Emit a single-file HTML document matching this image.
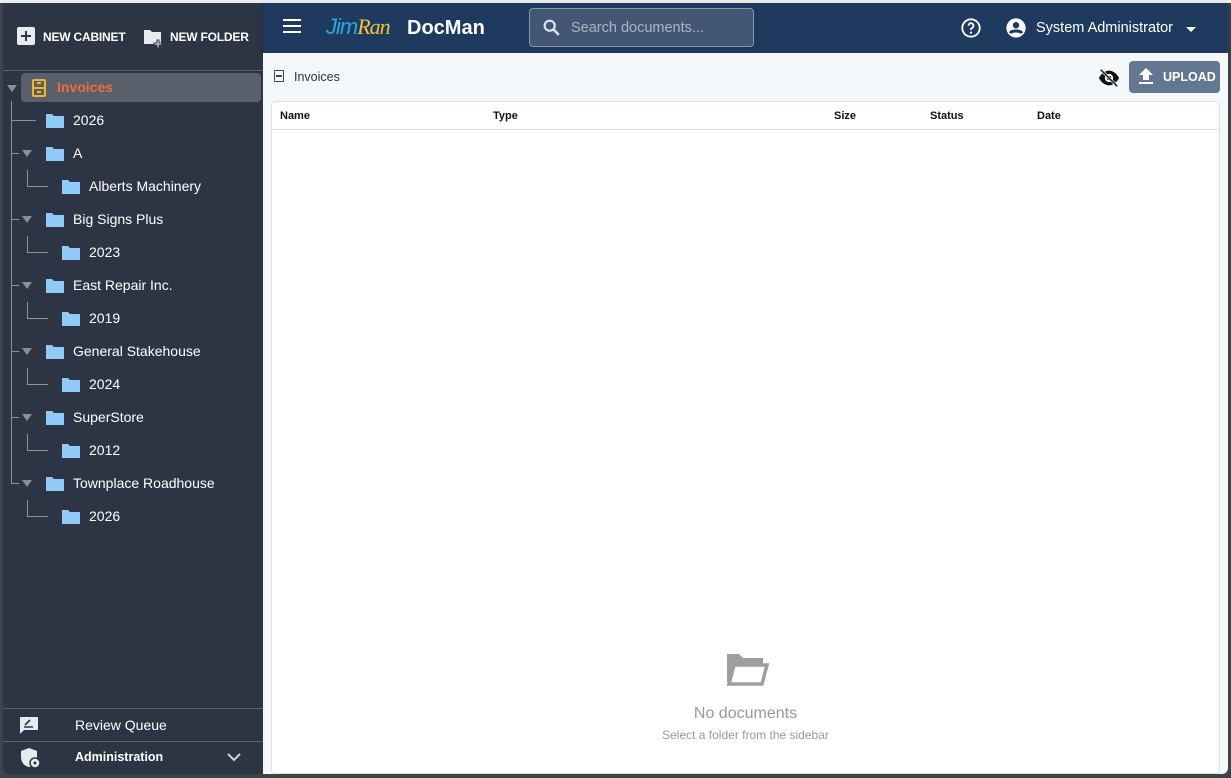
<!DOCTYPE html>
<html><head><meta charset="utf-8"><style>
*{box-sizing:border-box;margin:0;padding:0}
body{width:1231px;height:778px;background:#3d4347;font-family:"Liberation Sans",Roboto,sans-serif;position:relative;overflow:hidden}
.top{position:absolute;left:0;top:0;width:1231px;height:3px;background:#ececec}
.side{position:absolute;left:3px;top:3px;width:260px;height:771px;background:#2d3444;border-bottom-left-radius:6px}
.hdr{position:absolute;left:263px;top:3px;width:965px;height:50px;background:#1f3a5f;box-shadow:0 2px 4px rgba(0,0,0,.25)}
.main{position:absolute;left:263px;top:53px;width:965px;height:721px;background:#f5f8fb;border-bottom-right-radius:6px}
.card{position:absolute;left:271px;top:101px;width:949px;height:673px;background:#fff;border:1px solid #e0e0e0;border-radius:4px}
.a{position:absolute;white-space:nowrap}
.w{color:#fff}
.tl{position:absolute;background:#8e949c}
.row{position:absolute;color:#fff;font-size:14px;height:20px;line-height:20px}
.tri{position:absolute;width:0;height:0;border-left:5px solid transparent;border-right:5px solid transparent;border-top:7px solid #8b8f96}
</style></head><body>
<div class="top"></div>
<div class="side">
 <div class="a" style="left:14px;top:24px;width:18px;height:18px;background:#e6ebf0;border-radius:2px"></div>
 <div class="a" style="left:18px;top:32px;width:10px;height:2px;background:#2d3444"></div>
 <div class="a" style="left:22px;top:28px;width:2px;height:10px;background:#2d3444"></div>
 <div class="a w" style="left:40px;top:27px;font-size:12px;font-weight:bold;letter-spacing:-0.2px">NEW CABINET</div>
 <svg class="a" style="left:140px;top:24px" width="22" height="22" viewBox="0 0 22 22"><path d="M1 3h6l2 2h9v12H1z" fill="#e6ebf0"/><path d="M14 13h2v3h3v2h-3v3h-2v-3h-3v-2h3z" fill="#e6ebf0" stroke="#2d3444" stroke-width="1"/></svg>
 <div class="a w" style="left:167px;top:27px;font-size:12px;font-weight:bold;letter-spacing:-0.2px">NEW FOLDER</div>
 <div class="a" style="left:0;top:67px;width:260px;height:1px;background:#5a606b"></div>
 <div class="a" style="left:18px;top:70px;width:240px;height:29px;background:#5a606b;border-radius:4px"></div>
 <div class="tri" style="left:4px;top:82px"></div>
 <div class="a" style="left:29px;top:76px;width:14px;height:18px;border:2px solid #f0b429;border-radius:2px"></div>
 <div class="a" style="left:31px;top:84px;width:10px;height:2px;background:#f0b429"></div>
 <div class="a" style="left:34px;top:79px;width:4px;height:2px;background:#f0b429"></div>
 <div class="a" style="left:34px;top:88px;width:4px;height:2px;background:#f0b429"></div>
 <div class="a" style="left:54px;top:76px;font-size:14px;font-weight:bold;color:#f26a3d">Invoices</div>
</div>
<div class="hdr">
 <div class="a" style="left:20px;top:16px;width:18px;height:2px;background:#fff;box-shadow:0 6px 0 #fff,0 12px 0 #fff"></div>
 <div class="a" style="left:63px;top:11px;font-size:22px;font-style:italic;letter-spacing:-1px"><span style="color:#29a8e0">Jim</span><span style="color:#f3c13a;font-family:'Liberation Serif',serif">Ran</span></div>
 <div class="a w" style="left:144px;top:14px;font-size:20px;font-weight:bold">DocMan</div>
 <div class="a" style="left:266px;top:5px;width:225px;height:39px;background:#435775;border:1px solid #8596ad;border-radius:4px"></div>
 <svg class="a" style="left:278px;top:14px" width="22" height="22" viewBox="0 0 24 24"><circle cx="9.5" cy="9.5" r="5.5" fill="none" stroke="#dfe5ee" stroke-width="2.4"/><path d="M13.5 13.5l6 6" stroke="#dfe5ee" stroke-width="2.6"/></svg>
 <div class="a" style="left:308px;top:17px;font-size:14.5px;color:#a9b5c6">Search documents...</div>
 <svg class="a" style="left:697px;top:14px" width="22" height="22" viewBox="0 0 24 24"><circle cx="12" cy="12" r="9.5" fill="none" stroke="#fff" stroke-width="2"/><path d="M9.3 9.5a2.7 2.7 0 1 1 3.8 2.4c-.8.4-1.1.9-1.1 1.8v.5" fill="none" stroke="#fff" stroke-width="2"/><circle cx="12" cy="17" r="1.2" fill="#fff"/></svg>
 <svg class="a" style="left:742px;top:14px" width="22" height="22" viewBox="0 0 24 24"><circle cx="12" cy="12" r="10.5" fill="#fff"/><circle cx="12" cy="9" r="3.5" fill="#1f3a5f"/><path d="M5.5 17.5c2-3 11-3 13 0" stroke="#1f3a5f" stroke-width="3.2" fill="none"/></svg>
 <div class="a w" style="left:773px;top:17px;font-size:14.5px">System Administrator</div>
 <div class="a" style="left:923px;top:24px;border-left:5px solid transparent;border-right:5px solid transparent;border-top:5px solid #fff"></div>
</div>
<div class="main">
 <div class="a" style="left:11px;top:17px;width:10px;height:12px;border:1.5px solid #444;border-radius:1px"></div>
 <div class="a" style="left:13px;top:22px;width:6px;height:1.5px;background:#444"></div>
 <div class="a" style="left:31px;top:17px;font-size:12.5px;color:#333">Invoices</div>
 <svg class="a" style="left:835px;top:14px" width="22" height="22" viewBox="0 0 24 24"><path d="M1 12c3-6 8-8 11-8s8 2 11 8c-3 6-8 8-11 8s-8-2-11-8z" fill="#111"/><circle cx="12" cy="12" r="4.5" fill="#fff"/><circle cx="12" cy="12" r="2.5" fill="#111"/><path d="M3 3l18 18" stroke="#fff" stroke-width="3"/><path d="M3 3l18 18" stroke="#111" stroke-width="1.6"/></svg>
 <div class="a" style="left:866px;top:8px;width:91px;height:32px;background:#637791;border-radius:4px"></div>
 <svg class="a" style="left:873px;top:13px" width="20" height="20" viewBox="0 0 20 20"><path d="M10 2l7 7h-4v5H7V9H3z M3 16h14v2H3z" fill="#fff"/></svg>
 <div class="a w" style="left:900px;top:17px;font-size:12.5px;font-weight:bold">UPLOAD</div>
</div>
<div class="card">
 <div class="a" style="left:0;top:27px;width:947px;height:1px;background:#e0e0e0"></div>
 <div class="a" style="left:8px;top:8px;font-size:11px;font-weight:bold;color:#111">Name</div>
 <div class="a" style="left:221px;top:8px;font-size:11px;font-weight:bold;color:#111">Type</div>
 <div class="a" style="left:562px;top:8px;font-size:11px;font-weight:bold;color:#111">Size</div>
 <div class="a" style="left:658px;top:8px;font-size:11px;font-weight:bold;color:#111">Status</div>
 <div class="a" style="left:765px;top:8px;font-size:11px;font-weight:bold;color:#111">Date</div>
 <svg class="a" style="left:453px;top:550px" width="44" height="36" viewBox="0 0 44 36"><path d="M2 2h12l4 4h20v6H10L6 30H2z" fill="#9e9e9e"/><path d="M9 13h33l-5 19H4z" fill="none" stroke="#9e9e9e" stroke-width="3.5"/></svg>
 <div class="a" style="left:0;width:947px;text-align:center;top:603px;font-size:16px;color:#999">No documents</div>
 <div class="a" style="left:0;width:947px;text-align:center;top:626px;font-size:12px;color:#999">Select a folder from the sidebar</div>
</div>
<div class="a" style="left:3px;top:708px;width:260px;height:1px;background:#5a606b"></div>
<div class="a" style="left:3px;top:741px;width:260px;height:1px;background:#5a606b"></div>
<svg class="a" style="left:19px;top:715px" width="20" height="20" viewBox="0 0 20 20"><path d="M1 2h18v13H5l-4 4z" fill="#e6ebf0"/><path d="M5 12h9M6 10l5-5" stroke="#2d3444" stroke-width="1.6"/></svg>
<div class="a" style="left:75px;top:717px;font-size:14px;color:#fff">Review Queue</div>
<svg class="a" style="left:20px;top:747px" width="22" height="22" viewBox="0 0 22 22"><path d="M9 1l8 3v6c0 5-3 9-8 10-5-1-8-5-8-10V4z" fill="#e6ebf0"/><circle cx="15" cy="16" r="5" fill="#e6ebf0" stroke="#2d3444" stroke-width="1.5"/><circle cx="15" cy="16" r="1.5" fill="#2d3444"/></svg>
<div class="a" style="left:75px;top:750px;font-size:12.5px;font-weight:bold;color:#fff">Administration</div>
<svg class="a" style="left:226px;top:751px" width="16" height="12" viewBox="0 0 16 12"><path d="M2 3l6 6 6-6" stroke="#cfd4da" stroke-width="2" fill="none"/></svg>
<div id="t"></div>
<script>
var items=[[1,"2026",0],[1,"A",1],[2,"Alberts Machinery",0],[1,"Big Signs Plus",1],[2,"2023",0],[1,"East Repair Inc.",1],[2,"2019",0],[1,"General Stakehouse",1],[2,"2024",0],[1,"SuperStore",1],[2,"2012",0],[1,"Townplace Roadhouse",1],[2,"2026",0]];
var h="";items.forEach(function(it,i){var cy=120+i*33;var lv=it[0];
if(lv==1){h+='<div class="tl" style="left:11px;top:'+cy+'px;width:'+(it[2]?8:25)+'px;height:1px"></div>';
if(it[2])h+='<div class="tri" style="left:22px;top:'+(cy-3)+'px"></div>';
h+='<svg class="a" style="left:46px;top:'+(cy-7)+'px" width="18" height="15" viewBox="0 0 18 15"><path d="M0 1h6l2 2h10v12H0z" fill="#90caf9"/></svg>';
h+='<div class="row" style="left:73px;top:'+(cy-10)+'px">'+it[1]+'</div>';}
else{h+='<div class="tl" style="left:27px;top:'+(cy-16)+'px;width:1px;height:16px"></div><div class="tl" style="left:27px;top:'+cy+'px;width:21px;height:1px"></div>';
h+='<svg class="a" style="left:62px;top:'+(cy-7)+'px" width="18" height="15" viewBox="0 0 18 15"><path d="M0 1h6l2 2h10v12H0z" fill="#90caf9"/></svg>';
h+='<div class="row" style="left:89px;top:'+(cy-10)+'px">'+it[1]+'</div>';}
});
h+='<div class="tl" style="left:11px;top:101px;width:1px;height:383px"></div>';
document.getElementById("t").innerHTML=h;
</script>
</body></html>
